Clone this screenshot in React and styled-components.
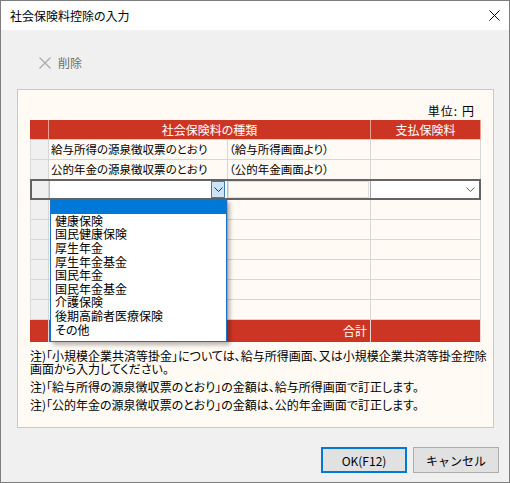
import React from "react";
import styled, { createGlobalStyle } from "styled-components";

const GlobalStyle = createGlobalStyle`
  html, body { margin: 0; padding: 0; background: #ffffff; }
  body {
    font-family: "Noto Sans CJK JP", "Noto Sans", sans-serif;
    font-feature-settings: "palt";
  }
  * { box-sizing: border-box; }
`;

const RED = "#cc3524";
const GRID = "#d6d6d6";
const CREAM = "#fffaf3";

const Window = styled.div`
  width: 510px;
  height: 483px;
  border: 1px solid #7d7d7d;
  background: #f0f0f0;
  display: flex;
  flex-direction: column;
`;

const TitleBar = styled.div`
  height: 29px;
  flex-shrink: 0;
  background: #ffffff;
  display: flex;
  align-items: center;
  justify-content: space-between;
  padding: 0 9px 0 9px;
`;

const Title = styled.span`
  font-size: 12px;
  line-height: 14px;
  color: #000;
`;

const CloseIcon = styled.svg`
  display: block;
`;

const Toolbar = styled.div`
  height: 59px;
  flex-shrink: 0;
  display: flex;
  align-items: flex-start;
  padding: 27px 0 0 38px;
`;

const ToolButton = styled.div`
  display: flex;
  align-items: center;
  gap: 7px;
  height: 12px;
  color: #6d6d6d;
  font-size: 12px;
  line-height: 12px;
`;

const Panel = styled.div`
  margin-left: 16px;
  width: 477px;
  height: 339px;
  flex-shrink: 0;
  border: 1px solid #c8c8c8;
  background: ${CREAM};
  padding-left: 12px;
`;

const UnitRow = styled.div`
  width: 451px;
  height: 30px;
  display: flex;
  align-items: flex-end;
  justify-content: flex-end;
  gap: 4px;
  padding: 0 7px 2px 0;
  font-size: 12px;
  line-height: 14px;
  color: #000;
`;

const UnitText = styled.span`
  font-feature-settings: "palt" 0;
  letter-spacing: ${(p) => p.$spacing || 0}px;
`;

const Table = styled.div`
  width: 451px;
  display: flex;
  flex-direction: column;
  font-size: 12px;
  color: #000;
`;

const Row = styled.div`
  display: grid;
  grid-template-columns: 19px 179px 143px 110px;
  height: ${(p) => p.$h || 20}px;
`;

const HeadCell = styled.div`
  grid-column: span ${(p) => p.$span || 1};
  background: ${RED};
  color: #ffffff;
  border-right: 1px solid #e9a093;
  border-bottom: 1px solid #f0c6be;
  text-align: center;
  line-height: 19px;
  white-space: nowrap;
`;

const RowHead = styled.div`
  background: #f0f0f0;
  border-left: 1px solid #dcdcdc;
  border-right: 1px solid ${GRID};
  border-bottom: 1px solid ${GRID};
`;

const Cell = styled.div`
  border-right: 1px solid ${GRID};
  border-bottom: 1px solid ${GRID};
  padding-left: ${(p) => p.$pad ?? 2}px;
  font-size: 11.5px;
  line-height: 19px;
  white-space: nowrap;
  overflow: hidden;
`;

const FootCell = styled.div`
  grid-column: span ${(p) => p.$span || 1};
  background: ${RED};
  color: #ffffff;
  border-right: 1px solid #f3d6cf;
  text-align: right;
  padding-right: 3px;
  line-height: 22px;
  white-space: nowrap;
`;

const EditRow = styled.div`
  position: relative;
  z-index: 2;
  margin-top: -1px;
  height: 21px;
  border: 2px solid #646464;
  background: ${CREAM};
  display: grid;
  grid-template-columns: 17px 179px 143px 108px;
`;

const EditHead = styled.div`
  background: #f0f0f0;
  border-right: 1px solid ${GRID};
`;

const ComboCell = styled.div`
  border-left: 1px solid #f2b45a;
  border-right: 1px solid #f2b45a;
  background: #ffffff;
  display: flex;
  justify-content: flex-end;
  align-items: flex-start;
  padding-right: 2px;
`;

const ComboButton = styled.div`
  width: 14px;
  height: 17px;
  background: #cce4f7;
  border: 1px solid #3d7fb3;
  display: flex;
  align-items: center;
  justify-content: center;
`;

const PlainCell = styled.div`
  border-right: 1px solid #a6a6a6;
  padding: 0 1px 0 0;
  display: flex;
`;

const PlainInner = styled.div`
  flex: 1;
  border: 1px solid #dedede;
  background: ${CREAM};
`;

const AmountCombo = styled.div`
  background: #ffffff;
  display: flex;
  align-items: center;
  justify-content: flex-end;
  padding-right: 4px;
`;

const Chevron = styled.svg`
  display: block;
`;

const DropList = styled.div`
  position: absolute;
  left: 18px;
  top: 18px;
  width: 177px;
  height: 143px;
  background: #ffffff;
  border: 1px solid #1f6fc4;
  box-shadow: 3px 3px 4px rgba(0, 0, 0, 0.28);
  font-size: 12px;
  z-index: 5;
`;

const DropItem = styled.div`
  height: 13.65px;
  line-height: 13.65px;
  padding-left: 4px;
  white-space: nowrap;
  background: ${(p) => (p.$active ? "#0078d7" : "transparent")};
  color: ${(p) => (p.$active ? "#ffffff" : "#000000")};
`;

const Notes = styled.div`
  padding-top: 7px;
  font-size: 12px;
  line-height: 13px;
  color: #000;
`;

const Note = styled.p`
  margin: 0;
  white-space: nowrap;
  & + & {
    margin-top: 5px;
  }
`;

const ButtonRow = styled.div`
  display: flex;
  justify-content: flex-end;
  gap: 6px;
  padding: 19px 10px 0 0;
`;

const Button = styled.button`
  width: 86px;
  height: 26px;
  padding: 0;
  font-family: inherit;
  font-size: 12px;
  color: #000;
  background: #e1e1e1;
  border: ${(p) => (p.$primary ? "2px solid #0078d7" : "1px solid #adadad")};
`;

const DownChevron = ({ color }) => (
  <Chevron width="9" height="5" viewBox="0 0 9 5">
    <polyline points="0.5,0.5 4.5,4.5 8.5,0.5" fill="none" stroke={color} strokeWidth="1" />
  </Chevron>
);

const emptyRows = [0, 1, 2, 3, 4, 5];
const options = [
  "",
  "健康保険",
  "国民健康保険",
  "厚生年金",
  "厚生年金基金",
  "国民年金",
  "国民年金基金",
  "介護保険",
  "後期高齢者医療保険",
  "その他",
];

export default function App() {
  return (
    <>
      <GlobalStyle />
      <Window>
        <TitleBar>
          <Title>社会保険料控除の入力</Title>
          <CloseIcon width="11" height="11" viewBox="0 0 11 11">
            <path d="M0.5 0.5 L10.5 10.5 M10.5 0.5 L0.5 10.5" stroke="#000" strokeWidth="1" />
          </CloseIcon>
        </TitleBar>
        <Toolbar>
          <ToolButton>
            <svg width="12" height="12" viewBox="0 0 12 12">
              <path d="M0.5 0.5 L11.5 11.5 M11.5 0.5 L0.5 11.5" stroke="#ababab" strokeWidth="1.3" />
            </svg>
            削除
          </ToolButton>
        </Toolbar>
        <Panel>
          <UnitRow>
            <UnitText $spacing={1}>単位:</UnitText>
            <UnitText>円</UnitText>
          </UnitRow>
          <Table>
            <Row>
              <HeadCell />
              <HeadCell $span={2}>社会保険料の種類</HeadCell>
              <HeadCell>支払保険料</HeadCell>
            </Row>
            <Row>
              <RowHead />
              <Cell>給与所得の源泉徴収票のとおり</Cell>
              <Cell $pad={1}>（給与所得画面より）</Cell>
              <Cell />
            </Row>
            <Row>
              <RowHead />
              <Cell>公的年金の源泉徴収票のとおり</Cell>
              <Cell $pad={1}>（公的年金画面より）</Cell>
              <Cell />
            </Row>
            <EditRow>
              <EditHead />
              <ComboCell>
                <ComboButton>
                  <DownChevron color="#333333" />
                </ComboButton>
              </ComboCell>
              <PlainCell>
                <PlainInner />
              </PlainCell>
              <AmountCombo>
                <DownChevron color="#606060" />
              </AmountCombo>
              <DropList>
                {options.map((o, i) => (
                  <DropItem key={i} $active={i === 0}>
                    {o}
                  </DropItem>
                ))}
              </DropList>
            </EditRow>
            {emptyRows.map((r) => (
              <Row key={r}>
                <RowHead />
                <Cell />
                <Cell />
                <Cell />
              </Row>
            ))}
            <Row $h={22}>
              <FootCell />
              <FootCell $span={2}>合計</FootCell>
              <FootCell />
            </Row>
          </Table>
          <Notes>
            <Note>
              注)「小規模企業共済等掛金」については、給与所得画面、又は小規模企業共済等掛金控除
              <br />
              画面から入力してください。
            </Note>
            <Note>注)「給与所得の源泉徴収票のとおり」の金額は、給与所得画面で訂正します。</Note>
            <Note>注)「公的年金の源泉徴収票のとおり」の金額は、公的年金画面で訂正します。</Note>
          </Notes>
        </Panel>
        <ButtonRow>
          <Button $primary>OK(F12)</Button>
          <Button>キャンセル</Button>
        </ButtonRow>
      </Window>
    </>
  );
}
